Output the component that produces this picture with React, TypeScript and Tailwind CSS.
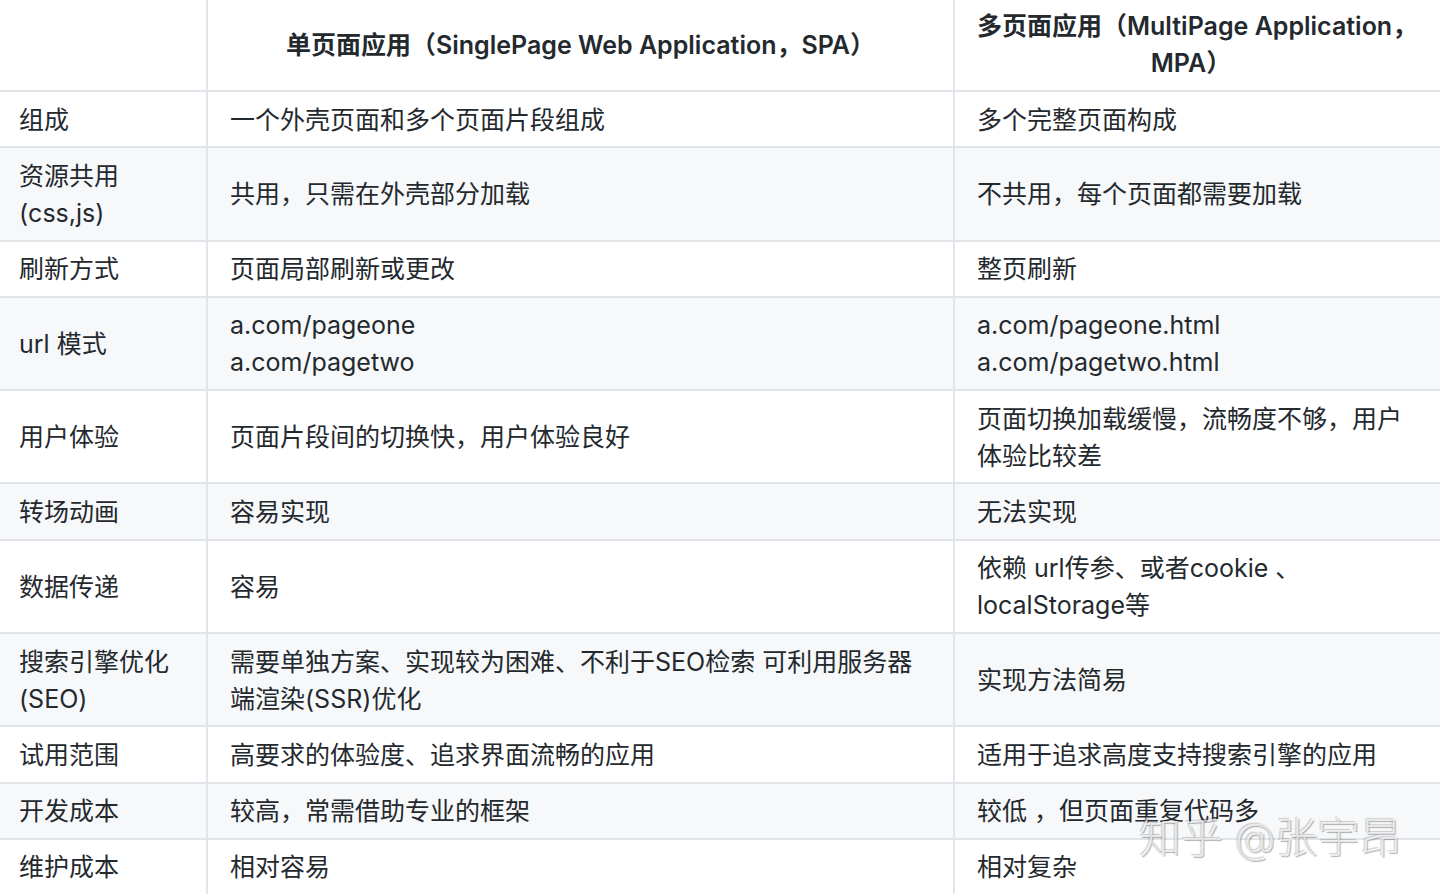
import React from 'react';

type Row = { label: React.ReactNode; spa: React.ReactNode; mpa: React.ReactNode };

const rows: Row[] = [
  { label: '组成', spa: '一个外壳页面和多个页面片段组成', mpa: '多个完整页面构成' },
  {
    label: (
      <>
        资源共用
        <br />
        (css,js)
      </>
    ),
    spa: '共用，只需在外壳部分加载',
    mpa: '不共用，每个页面都需要加载',
  },
  { label: '刷新方式', spa: '页面局部刷新或更改', mpa: '整页刷新' },
  {
    label: 'url 模式',
    spa: (
      <>
        a.com/pageone
        <br />
        a.com/pagetwo
      </>
    ),
    mpa: (
      <>
        a.com/pageone.html
        <br />
        a.com/pagetwo.html
      </>
    ),
  },
  {
    label: '用户体验',
    spa: '页面片段间的切换快，用户体验良好',
    mpa: (
      <>
        页面切换加载缓慢，流畅度不够，用户
        <br />
        体验比较差
      </>
    ),
  },
  { label: '转场动画', spa: '容易实现', mpa: '无法实现' },
  {
    label: '数据传递',
    spa: '容易',
    mpa: (
      <>
        依赖 url传参、或者cookie 、
        <br />
        localStorage等
      </>
    ),
  },
  {
    label: (
      <>
        搜索引擎优化
        <br />
        (SEO)
      </>
    ),
    spa: (
      <>
        需要单独方案、实现较为困难、不利于SEO检索 可利用服务器
        <br />
        端渲染(SSR)优化
      </>
    ),
    mpa: '实现方法简易',
  },
  { label: '试用范围', spa: '高要求的体验度、追求界面流畅的应用', mpa: '适用于追求高度支持搜索引擎的应用' },
  { label: '开发成本', spa: '较高，常需借助专业的框架', mpa: '较低 ，但页面重复代码多' },
  { label: '维护成本', spa: '相对容易', mpa: '相对复杂' },
];

export default function App() {
  return (
    <div
      className="relative w-[1440px] h-[894px] overflow-hidden bg-white text-[#24292e] text-[25px] leading-[37px]"
      style={{ fontFamily: 'Inter, "Noto Sans CJK SC", sans-serif' }}
    >
      <div className="grid grid-cols-[208px_747px_485px]">
        {/* 表头 */}
        <div className="border-r-2 border-b-2 border-[#e1e4e8] pt-[8px] pb-[8px]" />
        <div className="border-r-2 border-b-2 border-[#e1e4e8] pt-[8px] pb-[8px] px-[22px] font-semibold text-center flex items-center justify-center whitespace-nowrap">
          单页面应用（SinglePage Web Application，SPA）
        </div>
        <div className="border-b-2 border-[#e1e4e8] pt-[8px] pb-[8px] pl-[22px] pr-[35px] font-semibold text-center whitespace-nowrap">
          多页面应用（MultiPage Application，
          <br />
          MPA）
        </div>

        {rows.map((r, i) => {
          const bg = i % 2 === 1 ? 'bg-[#f6f8fa]' : 'bg-white';
          return (
            <React.Fragment key={i}>
              <div className={`${bg} border-r-2 border-b-2 border-[#e1e4e8] pt-[9.5px] pb-[7.8px] pl-[19px] flex items-center whitespace-nowrap`}>
                <div>{r.label}</div>
              </div>
              <div className={`${bg} border-r-2 border-b-2 border-[#e1e4e8] pt-[9.5px] pb-[7.8px] pl-[22px] flex items-center whitespace-nowrap`}>
                <div>{r.spa}</div>
              </div>
              <div className={`${bg} border-b-2 border-[#e1e4e8] pt-[9.5px] pb-[7.8px] pl-[22px] flex items-center whitespace-nowrap`}>
                <div>{r.mpa}</div>
              </div>
            </React.Fragment>
          );
        })}
      </div>

      {/* 水印 */}
      <div
        className="absolute left-[1139px] top-[810px] text-[42px] leading-[56px] font-light whitespace-nowrap text-white/70 pointer-events-none"
        style={{ textShadow: '1px 1px 1px rgba(0,0,0,0.3), -1px -1px 1px rgba(0,0,0,0.18)' }}
      >
        知乎 @张宇昂
      </div>
    </div>
  );
}
